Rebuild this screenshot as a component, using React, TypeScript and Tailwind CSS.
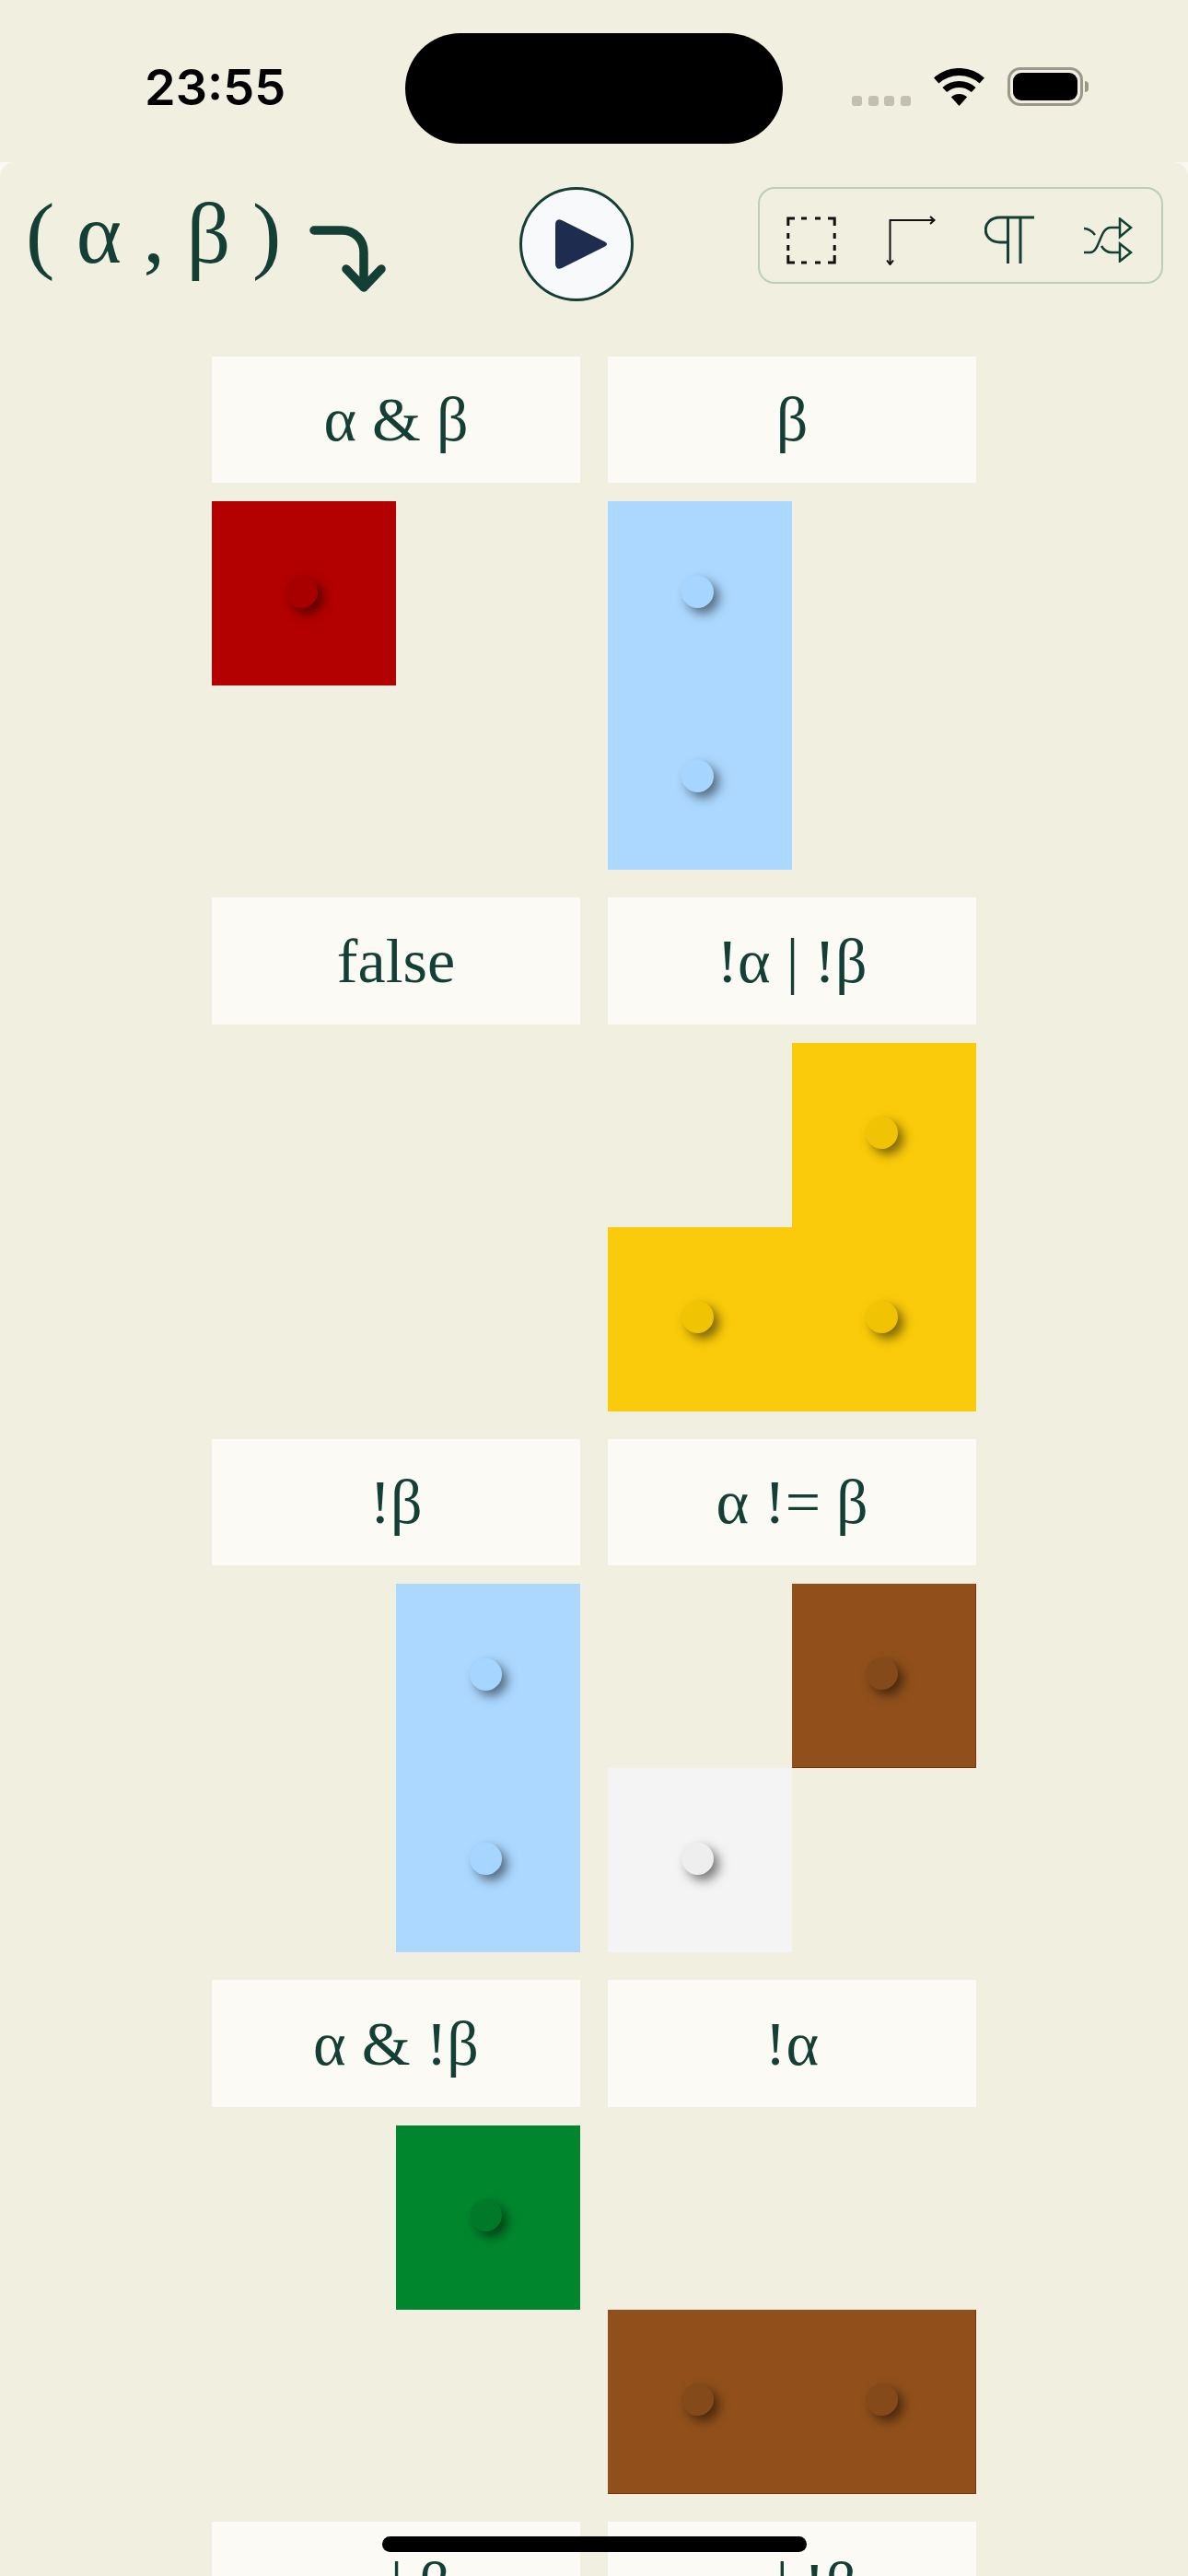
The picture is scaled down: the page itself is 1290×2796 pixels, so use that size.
const ink = '#133f35';

type Tile = { label: string; color: string; dot: string; cells: number[]; edge?: boolean };

const blue = 'bg-[#acd8ff]';
const blueDot = 'bg-[#a6d5ff]';
const brown = 'bg-[#91501b]';
const brownDot = 'bg-[#844a1a]';

// cells are numbered 0 1 / 2 3, same for every card
const tiles: Tile[] = [
  { label: 'α & β', color: 'bg-[#b30000]', dot: 'bg-[#a80000]', cells: [0] },
  { label: 'β', color: blue, dot: blueDot, cells: [0, 2] },
  { label: 'false', color: '', dot: '', cells: [] },
  { label: '!α | !β', color: 'bg-[#facb0a]', dot: 'bg-[#f0c305]', cells: [1, 2, 3] },
  { label: '!β', color: blue, dot: blueDot, cells: [1, 3] },
  { label: 'α != β', color: brown, dot: brownDot, cells: [1], edge: true },
  { label: 'α & !β', color: 'bg-[#00872e]', dot: 'bg-[#007a29]', cells: [1] },
  { label: '!α', color: brown, dot: brownDot, cells: [2, 3], edge: true },
  { label: 'α | β', color: blue, dot: blueDot, cells: [] },
  { label: 'α | !β', color: blue, dot: blueDot, cells: [] },
];

function StatusBar() {
  return (
    <div className="flex h-[176px] items-start">
      <div className="ml-[157px] mt-[62px] w-[283px] font-['Inter',sans-serif] text-[54px] font-semibold leading-[66px] text-black">
        23:55
      </div>
      <div className="mt-[36px] h-[120px] w-[410px] rounded-[60px] bg-black" />
      <div className="ml-[75px] mt-[104px] flex gap-[6.5px]">
        <div className="h-[11px] w-[11px] rounded-[3px] bg-[#c3c0b1]" />
        <div className="h-[11px] w-[11px] rounded-[3px] bg-[#c3c0b1]" />
        <div className="h-[11px] w-[11px] rounded-[3px] bg-[#c3c0b1]" />
        <div className="h-[11px] w-[11px] rounded-[3px] bg-[#c3c0b1]" />
      </div>
      <svg className="ml-[25px] mt-[74px]" width="55" height="41" viewBox="0 0 55 41" fill="none" stroke="#000">
        <path d="M2.7 13.5 A37 37 0 0 1 52.3 13.5" strokeWidth="8" />
        <path d="M11.8 23.5 A23.5 23.5 0 0 1 43.2 23.5" strokeWidth="7" />
        <path d="M27.5 41 L18.8 31.3 A13 13 0 0 1 36.2 31.3 Z" fill="#000" stroke="none" />
      </svg>
      <div className="ml-[25px] mt-[73px] flex items-center">
        <div className="h-[42px] w-[82px] rounded-[14px] border-[3px] border-[#9b9789] p-[3px]">
          <div className="h-full w-full rounded-[9px] bg-black" />
        </div>
        <div className="ml-[2px] h-[12px] w-[4px] rounded-r-[4px] bg-[#9b9789]" />
      </div>
    </div>
  );
}

function Toolbar() {
  return (
    <div className="flex h-[105px] w-[440px] items-center justify-between rounded-[18px] border-2 border-[#bccdbb] pl-[29px] pr-[31px] pt-[10px]">
      <svg width="54" height="52" viewBox="0 0 54 52" fill="none" stroke="#111" strokeWidth="3">
        <path d="M9 2 H1.8 V10 M45 2 H52.2 V10 M9 50 H1.8 V42 M45 50 H52.2 V42" />
        <path d="M16 2 H22 M31 2 H37 M16 50 H22 M31 50 H37 M1.8 18 V24 M1.8 31 V37 M52.2 18 V24 M52.2 31 V37" />
      </svg>
      <svg width="54" height="54" viewBox="0 0 54 54" fill="none" stroke="#111" strokeWidth="2">
        <path d="M52 5 H4.5 V53" />
        <path d="M48 1 L52.5 5 L48 9 M1 48.5 L4.5 53 L8 48.5" />
      </svg>
      <svg width="54" height="53" viewBox="0 0 54 53" fill="none" stroke={ink} strokeWidth="3">
        <path d="M54 2 H17 C-4 2 -4 29 17 29 H26" />
        <path d="M25.5 2 V52 M39 2 V52" />
      </svg>
      <svg width="53" height="49" viewBox="0 0 53 49" fill="none" stroke={ink} strokeWidth="2.5">
        <path d="M0 12 C6 12 9 15 12 19" />
        <path d="M0 38 H7 C17 38 17 11 29 11 H39" />
        <path d="M19 31 C22 36 25 38 30 38 H39" />
        <path d="M39 1.5 L51 11 L39 21 Z M39 28.5 L51 38 L39 47.5 Z" />
      </svg>
    </div>
  );
}

function Header() {
  return (
    <div className="flex h-[210.5px] items-start pl-[28px] pt-[27px]">
      <div className="flex w-[536px]">
        <div className="w-[307px] whitespace-pre font-['Liberation_Serif',serif] text-[94px] leading-[100px] text-[#133f35]">
          ( α , β )
        </div>
        <svg className="mt-[41px]" width="84" height="74" viewBox="0 0 84 74" fill="none" stroke={ink} strokeWidth="9.5" strokeLinecap="round" strokeLinejoin="round">
          <path d="M6 6 H36 C50 6 60 16 60 30 V66" />
          <path d="M41 48 L60 68 L79 48" />
        </svg>
      </div>
      <button className="flex h-[124px] w-[124px] items-center justify-center rounded-full border-[3px] border-[#133f35] bg-[#f8f9fb] pl-[10px]">
        <svg width="58" height="58" viewBox="0 0 58 58">
          <path d="M8 3 C4 1 1 3 1 8 V50 C1 55 4 57 8 55 L54 32 C58 30 58 28 54 26 Z" fill="#1e2c50" />
        </svg>
      </button>
      <div className="ml-[135px]">
        <Toolbar />
      </div>
    </div>
  );
}

function Cell({ color, dot, edge }: { color: string; dot: string; edge: string }) {
  return (
    <div className={`flex items-center justify-center pb-[4px] pr-[5px] ${color} ${edge}`}>
      <div className={`h-[35px] w-[35px] rounded-full shadow-[6px_6px_12px_rgba(0,0,0,0.5)] ${dot}`} />
    </div>
  );
}

function Card({ tile }: { tile: Tile }) {
  return (
    <div className="flex flex-col gap-5">
      <div className="flex h-[137.5px] items-center justify-center bg-[#fbfaf5] font-['Liberation_Serif',serif] text-[68px] leading-none text-[#133f35]">
        {tile.label}
      </div>
      <div className="grid h-[400px] grid-cols-2 grid-rows-2">
        {[0, 1, 2, 3].map((i) => {
          // the one two-coloured card: its lower left cell is the white one
          if (tile.label === 'α != β' && i === 2) {
            return <Cell key={i} color="bg-[#f4f4f4]" dot="bg-[#eeeeee]" edge="" />;
          }
          if (!tile.cells.includes(i)) return <div key={i} />;
          const edge = tile.edge ? `border-b border-[#8f2b00] ${i % 2 === 1 ? 'border-r' : ''}` : '';
          return <Cell key={i} color={tile.color} dot={tile.dot} edge={edge} />;
        })}
      </div>
    </div>
  );
}

export default function App() {
  return (
    <div className="relative h-[2796px] w-[1290px] overflow-hidden bg-[#f1efdf]">
      <StatusBar />
      <div className="bg-[#f9f8f2]">
        <div className="h-[2620px] rounded-t-[16px] bg-[#f1efdf]">
          <Header />
          <div className="ml-[230px] grid w-[830px] grid-cols-2 gap-x-[30px] gap-y-[30px]">
            {tiles.map((t) => (
              <Card key={t.label} tile={t} />
            ))}
          </div>
        </div>
      </div>
      {/* home indicator */}
      <div className="absolute bottom-[26px] left-[415px] h-[17px] w-[461px] rounded-full bg-black" />
    </div>
  );
}
